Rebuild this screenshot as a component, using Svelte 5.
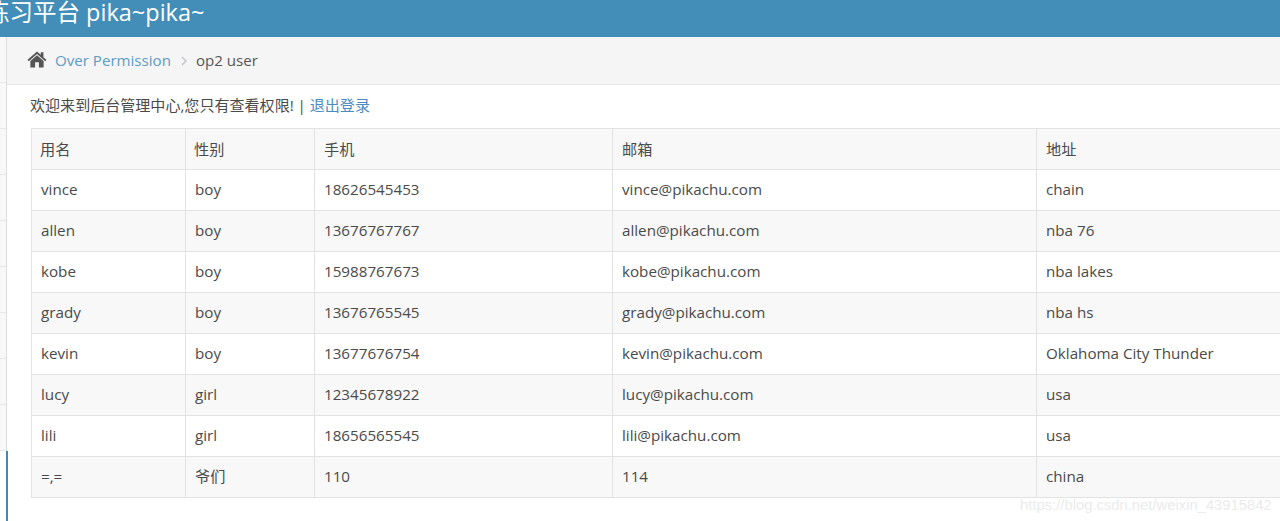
<script>
	const columns = ['用名', '性别', '手机', '邮箱', '地址'];
	const users = [
		['vince', 'boy', '18626545453', 'vince@pikachu.com', 'chain'],
		['allen', 'boy', '13676767767', 'allen@pikachu.com', 'nba 76'],
		['kobe', 'boy', '15988767673', 'kobe@pikachu.com', 'nba lakes'],
		['grady', 'boy', '13676765545', 'grady@pikachu.com', 'nba hs'],
		['kevin', 'boy', '13677676754', 'kevin@pikachu.com', 'Oklahoma City Thunder'],
		['lucy', 'girl', '12345678922', 'lucy@pikachu.com', 'usa'],
		['lili', 'girl', '18656565545', 'lili@pikachu.com', 'usa'],
		['=,=', '爷们', '110', '114', 'china']
	];
</script>

<div class="page">
	<header class="navbar">
		<span class="brand">练习平台 pika~pika~</span>
	</header>
	<div class="layout">
		<aside class="sidebar">
			{#each [1, 2, 3, 4, 5, 6, 7, 8, 9] as item}
				<div class="side-item"></div>
			{/each}
			<div class="side-item active"></div>
		</aside>
		<main class="content">
			<div class="breadcrumbs">
				<svg class="home" viewBox="0 0 20 18" width="20" height="17" aria-hidden="true">
					<path d="M10 0.5 L0 9.3 L1.3 10.8 L10 3.2 L18.7 10.8 L20 9.3 L16.8 6.5 V1.2 H14 V4 Z" fill="#555" />
					<path d="M10 4.6 L3 10.7 V17.5 H8 V12 H12 V17.5 H17 V10.7 Z" fill="#555" />
				</svg>
				<a href="#top" class="crumb">Over Permission</a>
				<svg class="sep" viewBox="0 0 6 10" width="6" height="10" aria-hidden="true">
					<path d="M1 1 L5 5 L1 9" fill="none" stroke="#c2c6cc" stroke-width="1.5" />
				</svg>
				<span class="current">op2 user</span>
			</div>
			<div class="body">
				<p class="welcome">欢迎来到后台管理中心,您只有查看权限! | <a href="#top">退出登录</a></p>
				<table>
					<thead>
						<tr>
							{#each columns as col}
								<th>{col}</th>
							{/each}
						</tr>
					</thead>
					<tbody>
						{#each users as row}
							<tr>
								{#each row as cell}
									<td>{cell}</td>
								{/each}
							</tr>
						{/each}
					</tbody>
				</table>
			</div>
		</main>
	</div>
	<span class="watermark">https://blog.csdn.net/weixin_43915842</span>
</div>

<style>
	:global(body) {
		margin: 0;
		background: #fff;
		overflow: hidden;
	}

	.page {
		position: relative;
		width: 1280px;
		height: 521px;
		overflow: hidden;
		font-family: 'Open Sans', 'Noto Sans CJK SC', sans-serif;
		font-size: 15.2px;
		color: #4a4a4a;
	}

	.navbar {
		height: 37px;
		background: #438eb9;
		overflow: hidden;
		position: relative;
	}

	.brand {
		position: absolute;
		left: -14px;
		bottom: 9px;
		color: #fff;
		font-size: 23.5px;
		line-height: 32px;
		white-space: nowrap;
	}

	.layout {
		display: flex;
		height: 484px;
	}

	.sidebar {
		width: 6px;
		flex-shrink: 0;
		background: #f8f8f8;
		border-right: 1px solid #ddd;
	}

	.side-item {
		height: 46px;
		box-sizing: border-box;
		border-bottom: 1px solid #e8e8e8;
	}

	.side-item.active {
		height: 70px;
		background: #fff;
		border-bottom: none;
		box-shadow: 1px 0 0 #3f87c2, 2px 0 0 #3f87c2;
	}

	.content {
		flex: 1;
		min-width: 0;
	}

	.breadcrumbs {
		height: 48px;
		box-sizing: border-box;
		display: flex;
		align-items: center;
		padding: 0 0 2px 20px;
		font-size: 15.1px;
		background: #f5f5f5;
		border-bottom: 1px solid #e5e5e5;
	}

	.home {
		margin-right: 8px;
	}

	.crumb {
		color: #5f9bc6;
		text-decoration: none;
	}

	.sep {
		margin: 2px 9px 0 10px;
	}

	.current {
		color: #555;
	}

	.body {
		padding-left: 24px;
	}

	.welcome {
		margin: 0 0 0 -1px;
		height: 43px;
		padding-top: 10px;
		box-sizing: border-box;
		font-size: 15.05px;
		line-height: 20px;
	}

	.welcome a {
		color: #4a8ac4;
		text-decoration: none;
	}

	table {
		border-collapse: collapse;
		table-layout: fixed;
		width: 1260px;
		border: 1px solid #ddd;
	}

	th,
	td {
		border: 1px solid #e2e2e2;
		padding: 0 9px;
		height: 41px;
		text-align: left;
		font-weight: 400;
		line-height: 20px;
		box-sizing: border-box;
	}

	td {
		padding-bottom: 2px;
	}

	th:nth-child(1) { width: 154px; padding-left: 8px; }
	th:nth-child(2) { width: 129px; padding-left: 8px; }
	th:nth-child(3) { width: 298px; }
	th:nth-child(4) { width: 424px; }

	thead tr,
	tbody tr:nth-child(even) {
		background: #f8f8f8;
	}

	.watermark {
		position: absolute;
		left: 1020px;
		top: 497px;
		font-family: 'Liberation Sans', sans-serif;
		font-size: 14.8px;
		color: #ebebeb;
		white-space: nowrap;
	}
</style>
